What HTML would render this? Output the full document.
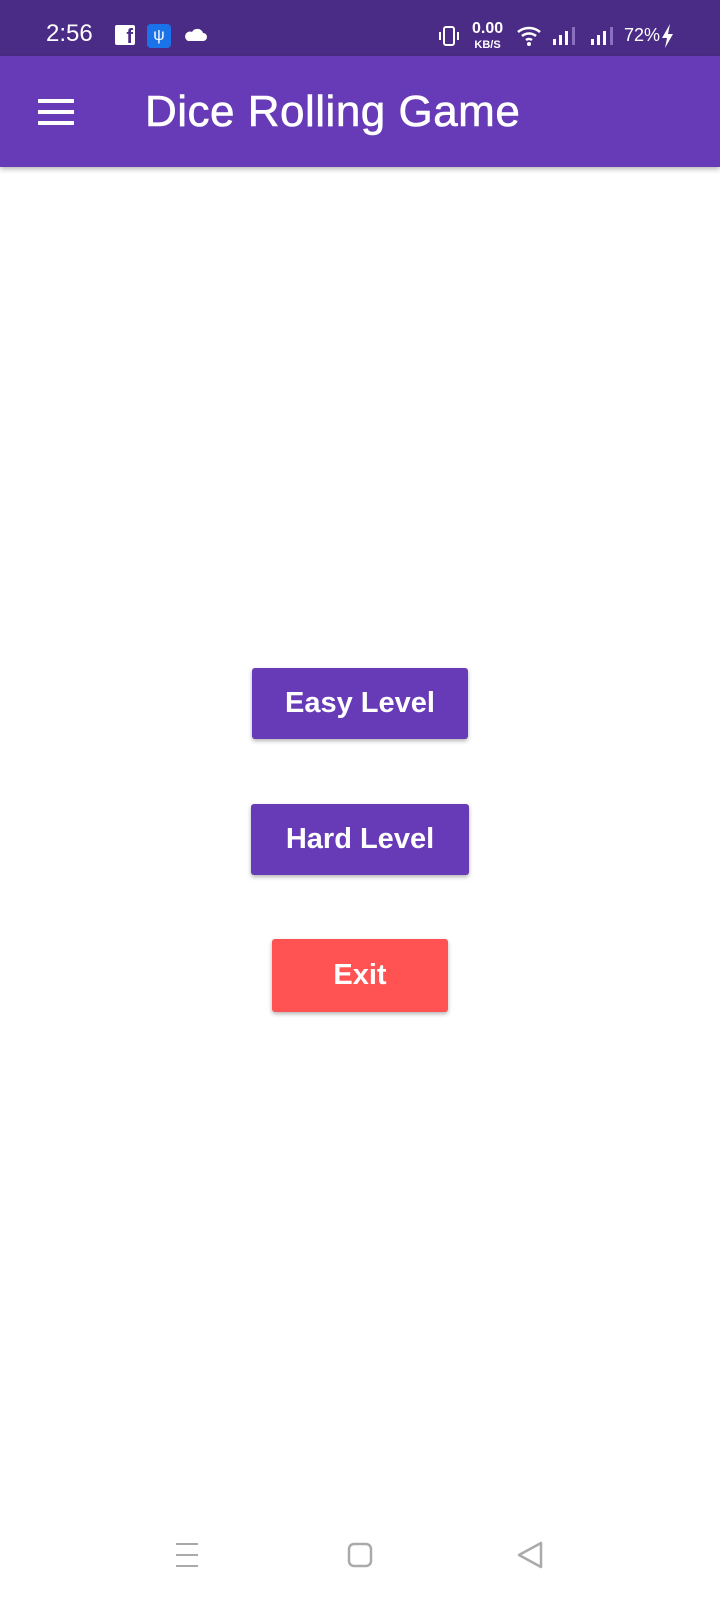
<!DOCTYPE html>
<html><head><style>
body{margin:0;width:720px;height:1600px;background:#fff;font-family:"Liberation Sans",sans-serif;position:relative;overflow:hidden}
.sb{position:absolute;left:0;top:0;width:720px;height:56px;background:#4a2c87;color:#fff}
.ab{position:absolute;left:0;top:56px;width:720px;height:111px;background:#673ab7;box-shadow:0 2px 5px rgba(0,0,0,.3)}
.t{position:absolute;left:145px;top:28px;font-size:44px;color:#fff;line-height:56px;letter-spacing:0.5px;-webkit-text-stroke:0.6px #fff}
.btn{position:absolute;color:#fff;font-weight:bold;font-size:29px;text-align:center;border-radius:3px;box-shadow:0 2px 4px rgba(0,0,0,.3)}
</style></head><body>
<div class="sb">
<span style="position:absolute;left:46px;top:20px;font-size:24px">2:56</span>
<div style="position:absolute;left:115px;top:25px;width:20px;height:20px;background:#fff;border-radius:2px;color:#4a2c87;font-weight:bold;font-size:20px;line-height:24px;text-align:right;overflow:hidden"><span style="margin-right:2px">f</span></div>
<div style="position:absolute;left:147px;top:24px;width:24px;height:24px;background:#1a73e8;border-radius:4px;color:#fff;font-size:16px;text-align:center;line-height:24px">ψ</div>
<svg style="position:absolute;left:183px;top:27px" width="24" height="16"><path d="M5 14h15a4 4 0 0 0 0-8 6 6 0 0 0-11-1 4.5 4.5 0 0 0-4 9z" fill="#fff"/></svg>
<svg style="position:absolute;left:437px;top:24px" width="24" height="24"><rect x="7" y="3" width="10" height="18" rx="2" fill="none" stroke="#fff" stroke-width="2"/><path d="M3 8v8M21 8v8" stroke="#fff" stroke-width="2"/></svg>
<div style="position:absolute;left:472px;top:21px;font-size:16px;font-weight:bold;line-height:15px;text-align:center">0.00<br><span style="font-size:11px">KB/S</span></div>
<svg style="position:absolute;left:516px;top:24px" width="28" height="22"><path d="M2 8a17 17 0 0 1 22 0M6 12a11 11 0 0 1 14 0M10 16a5 5 0 0 1 6 0" stroke="#fff" stroke-width="2.5" fill="none"/><circle cx="13" cy="20" r="2" fill="#fff"/></svg>
<svg style="position:absolute;left:553px;top:26px" width="30" height="20"><rect x="0" y="13" width="3" height="6" fill="#fff"/><rect x="6" y="9" width="3" height="10" fill="#fff"/><rect x="12" y="5" width="3" height="14" fill="#fff"/><rect x="19" y="1" width="3" height="18" fill="#8a70c0"/></svg>
<svg style="position:absolute;left:591px;top:26px" width="30" height="20"><rect x="0" y="13" width="3" height="6" fill="#fff"/><rect x="6" y="9" width="3" height="10" fill="#fff"/><rect x="12" y="5" width="3" height="14" fill="#fff"/><rect x="19" y="1" width="3" height="18" fill="#8a70c0"/></svg>
<span style="position:absolute;left:624px;top:25px;font-size:18px">72%</span>
<svg style="position:absolute;left:661px;top:24px" width="14" height="24"><path d="M9 0L1 14h5l-2 10 8-14H7z" fill="#fff"/></svg>
</div>
<div class="ab">
<div style="position:absolute;left:38px;top:43px;width:36px;height:4px;background:#fff"></div>
<div style="position:absolute;left:38px;top:54px;width:36px;height:4px;background:#fff"></div>
<div style="position:absolute;left:38px;top:65px;width:36px;height:4px;background:#fff"></div>
<div class="t">Dice Rolling Game</div>
</div>
<div class="btn" style="left:252px;top:668px;width:216px;height:71px;line-height:71px;background:#673ab7">Easy Level</div>
<div class="btn" style="left:251px;top:804px;width:218px;height:71px;line-height:71px;background:#673ab7">Hard Level</div>
<div class="btn" style="left:272px;top:939px;width:176px;height:73px;line-height:73px;background:#ff5252">Exit</div>
<svg style="position:absolute;left:170px;top:1538px" width="390" height="40">
<path d="M6 6h22M6 17h22M6 28h22" stroke="#aaa" stroke-width="2"/>
<rect x="179" y="6" width="22" height="22" rx="5" fill="none" stroke="#aaa" stroke-width="2.5"/>
<path d="M371 5L349 17 371 29z" fill="none" stroke="#aaa" stroke-width="2.5" stroke-linejoin="round"/>
</svg>
</body></html>
